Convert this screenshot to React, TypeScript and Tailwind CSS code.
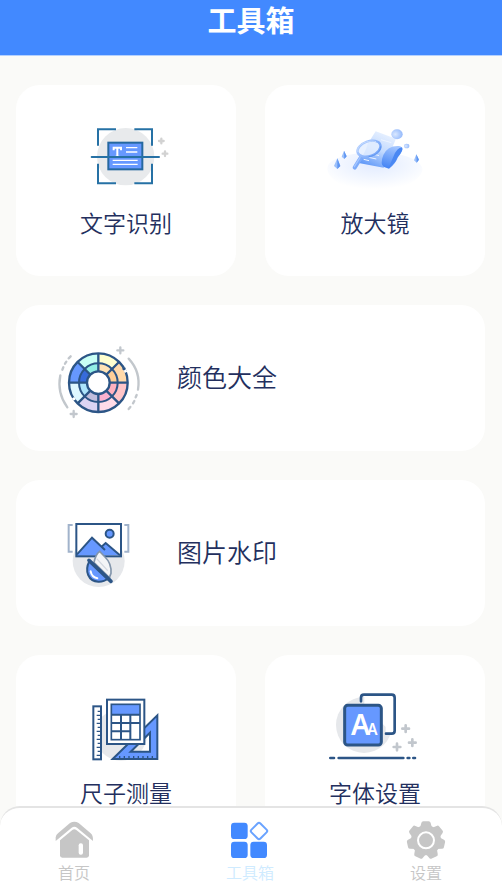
import type { ReactNode } from 'react';

const NAVY = '#2c5586';
const BLUE = '#6698ff';

export default function App() {
  return (
    <div
      lang="zh-CN"
      className="flex h-screen flex-col bg-[#fafaf8] font-['Noto_Sans_CJK_SC',sans-serif] font-[350] text-[#232f5e]"
    >
      <Header />
      <main className="min-h-0 flex-1 overflow-y-auto pt-[29px] pr-[17px] pb-5 pl-4 [scrollbar-width:none]">
        <div className="grid grid-cols-2 gap-[29px]">
          <ToolCard label="文字识别">
            <ScanTextIcon />
          </ToolCard>
          <ToolCard label="放大镜">
            <MagnifierIcon />
          </ToolCard>
          <ToolRow label="颜色大全">
            <ColorWheelIcon />
          </ToolRow>
          <ToolRow label="图片水印">
            <WatermarkIcon />
          </ToolRow>
          <ToolCard label="尺子测量">
            <RulerIcon />
          </ToolCard>
          <ToolCard label="字体设置">
            <FontIcon />
          </ToolCard>
        </div>
      </main>
      <TabBar />
    </div>
  );
}

function Header() {
  return (
    <header className="h-14 shrink-0 border-b border-[#b3d0ff] bg-[#4289ff]">
      <h1 className="text-center text-[29px] leading-[38px] font-bold text-white">
        工具箱
      </h1>
    </header>
  );
}

function ToolCard({ label, children }: { label: string; children: ReactNode }) {
  return (
    <button className="flex cursor-pointer flex-col items-center rounded-3xl bg-white pt-[30px] pb-[37px]">
      {children}
      <span className="text-[23px] leading-[34px]">{label}</span>
    </button>
  );
}

function ToolRow({ label, children }: { label: string; children: ReactNode }) {
  return (
    <button className="col-span-2 flex h-[146px] cursor-pointer items-center gap-[27px] rounded-3xl bg-white pl-[34px]">
      {children}
      <span className="pb-1 text-[25px] leading-9">{label}</span>
    </button>
  );
}

function TabBar() {
  return (
    <nav className="flex h-[76px] shrink-0 justify-between rounded-t-[20px] border-t-2 border-[#e4e4e4] bg-white pt-3 pr-[46px] pl-11">
      <Tab label="首页">
        <HomeIcon />
      </Tab>
      <Tab label="工具箱" active>
        <ToolsIcon />
      </Tab>
      <Tab label="设置">
        <GearIcon />
      </Tab>
    </nav>
  );
}

function Tab({
  label,
  active,
  children,
}: {
  label: string;
  active?: boolean;
  children: ReactNode;
}) {
  return (
    <button
      className={`flex w-[60px] cursor-pointer flex-col items-center gap-0.5 ${active ? 'text-[#cfebff]' : 'text-[#c6c6c6]'}`}
    >
      {children}
      <span className="text-base leading-5">{label}</span>
    </button>
  );
}

function Plus({ x, y, r = 7, color = '#c2c7cd', w = 7 }: { x: number; y: number; r?: number; color?: string; w?: number }) {
  return (
    <path
      d={`M${x - r} ${y}h${r * 2}M${x} ${y - r}v${r * 2}`}
      stroke={color}
      strokeWidth={w}
      strokeLinecap="round"
    />
  );
}

function ScanTextIcon() {
  return (
    <svg className="h-[90px] w-[110px]" viewBox="-27 0 330 270" fill="none">
      <circle cx="137" cy="125" r="86" fill="#e8eaec" />
      <path
        d="M54 92V43h54M163 43h53v49M54 146v59h54M163 205h53v-59"
        stroke="#2671a5"
        strokeWidth="6"
      />
      <rect x="85" y="83" width="102" height="80" fill={BLUE} stroke="#2568a0" strokeWidth="6" />
      <path d="M101 106v-8h22v8M112 98v27M106 125h12" stroke="#fff" strokeWidth="6" />
      <path d="M138 98h34M138 111h34" stroke="#fff" strokeWidth="4" />
      <path d="M98 136h75M98 148h75" stroke="#fff" strokeWidth="4" />
      <path d="M35 126h202" stroke="#2671a5" strokeWidth="6" strokeLinecap="round" />
      <Plus x={244} y={78} color="#d2d2d2" />
      <Plus x={255} y={116} color="#d2d2d2" />
    </svg>
  );
}

function MagnifierIcon() {
  return (
    <svg className="h-[90px] w-[110px]" viewBox="-15 0 330 270" fill="none">
      <defs>
        <radialGradient id="mag-floor" cx="0.5" cy="0.3" r="0.62">
          <stop offset="0" stopColor="#e2ebff" />
          <stop offset="0.5" stopColor="#f0f5ff" />
          <stop offset="1" stopColor="#fff" />
        </radialGradient>
        <linearGradient id="mag-sheet" x1="0.8" y1="0" x2="0.3" y2="1">
          <stop offset="0" stopColor="#edf4ff" />
          <stop offset="0.5" stopColor="#c3dafe" />
          <stop offset="1" stopColor="#5c96f8" />
        </linearGradient>
        <linearGradient id="mag-roll" x1="0.6" y1="0" x2="0.3" y2="1">
          <stop offset="0" stopColor="#a4c6ff" />
          <stop offset="1" stopColor="#4484f4" />
        </linearGradient>
        <linearGradient id="mag-ring" x1="0" y1="0" x2="1" y2="1">
          <stop offset="0" stopColor="#b4d0ff" />
          <stop offset="1" stopColor="#6c9ff7" />
        </linearGradient>
        <radialGradient id="mag-ball" cx="0.35" cy="0.5" r="0.7">
          <stop offset="0" stopColor="#dae8ff" />
          <stop offset="1" stopColor="#8fb6fb" />
        </radialGradient>
      </defs>
      <path
        d="M8 155C15 130 75 113 150 112s136 20 142 48c4 30-60 72-143 72S0 190 8 155Z"
        fill="url(#mag-floor)"
      />
      <path d="M152 49 213 71 176 158 97 143Q119 120 128 87Z" fill="url(#mag-sheet)" />
      <path
        d="M222 93Q188 91 175 120 164 148 177 156L192 161Q213 145 219 126 237 104 231 98 228 94 222 93Z"
        fill="url(#mag-roll)"
      />
      <path d="M231 97Q216 98 205 125T189 160Q210 146 217 128 237 106 231 97Z" fill="#4a88f3" />
      <path d="M168 74l31 9M142 116l20 6M131 127l23 5M116 133l16 4" stroke="#edf4ff" strokeWidth="3" />
      <path d="M108 127 89 158" stroke="#7dabfa" strokeWidth="12" strokeLinecap="round" />
      <path d="M105 128 88 155" stroke="#a3c5ff" strokeWidth="4" strokeLinecap="round" />
      <ellipse
        cx="132"
        cy="101"
        rx="36"
        ry="22"
        transform="rotate(-20 132 101)"
        fill="#e4efff"
        fillOpacity="0.85"
        stroke="url(#mag-ring)"
        strokeWidth="7"
      />
      <path d="M99 111C91 88 133 73 153 80" stroke="#c5dbff" strokeWidth="3" />
      <path d="M167 94c2 16-17 29-36 31" stroke="#5e96f2" strokeWidth="3" />
      <ellipse cx="216" cy="58" rx="17" ry="15" fill="url(#mag-ball)" />
      <ellipse cx="245" cy="93" rx="8" ry="7" fill="url(#mag-ball)" />
      <path d="M37 130 46 153 37 162 27 153ZM57 107 65 124 58 132 50 125ZM274 118 282 134 275 143 267 136Z" fill="#9cc0fa" />
      <path d="M37 130 46 153 37 162ZM57 107 65 124 58 132ZM274 118 282 134 275 143Z" fill="#5f96f2" />
    </svg>
  );
}

// clockwise from twelve o'clock
const OUTER = ['#ffffcf', '#ffd9aa', '#ffc5c8', '#ffdbe8', '#dcd4f4', '#def7ff', '#6698ff', '#c9fff5'];
const INNER = ['#ffe3b5', '#ffcf98', '#ffb1bf', '#fbb1cf', '#c1bddc', '#ade4fb', '#376bda', '#92eee5'];

function slice(i: number, r: number) {
  const a = (i * Math.PI) / 4;
  const b = a + Math.PI / 4;
  const cx = 145;
  const cy = 143;
  return `M${cx} ${cy}L${cx + r * Math.sin(a)} ${cy - r * Math.cos(a)}A${r} ${r} 0 0 1 ${cx + r * Math.sin(b)} ${cy - r * Math.cos(b)}Z`;
}

function ColorWheelIcon() {
  return (
    <svg className="size-[100px]" viewBox="0 -21 300 300" fill="none">
      {OUTER.map((c, i) => (
        <path key={c} d={slice(i, 87)} fill={c} />
      ))}
      {INNER.map((c, i) => (
        <path key={c} d={slice(i, 58)} fill={c} />
      ))}
      <g stroke={NAVY} strokeWidth="7">
        <path d="M145 56v174M58 143h174M83 81l124 124M207 81 83 205" />
        <circle cx="145" cy="143" r="58" strokeWidth="6" />
        <circle cx="145" cy="143" r="34" fill="#fff" />
        <circle cx="145" cy="143" r="88" />
      </g>
      <path d="M221 98 228 112M69 188 74 195" stroke="#fff" strokeWidth="8" />
      <circle cx="222" cy="101" r="5" fill={NAVY} />
      <g stroke="#c2c7cc" strokeWidth="7" strokeLinecap="round">
        <path d="M31 121C24 156 32 190 52 217M37 104l3-7M45 86l4-6M56 70l6-6" />
        <path d="M236 71C262 99 269 134 264 164M260 180l-3 7M253 198l-4 7M241 216l-5 6" />
      </g>
      <Plus x={211} y={46} r={9} />
      <Plus x={71} y={237} r={9} />
    </svg>
  );
}

function WatermarkIcon() {
  return (
    <svg className="size-[100px]" viewBox="-15 -21 300 300" fill="none">
      <circle cx="131" cy="153" r="78" fill="#e6e8eb" />
      <path d="M53 45H41v80h12M208 45h12v80h-12" stroke="#a1b3cb" strokeWidth="6" />
      <rect x="64" y="42" width="134" height="97" fill="#fff" />
      <path d="M66 133 111 83 139 111 152 99 195 136 64 138Z" fill={BLUE} />
      <path d="M66 133 111 83 150 120M138 112 152 99 195 136" stroke={NAVY} strokeWidth="6" />
      <circle cx="164" cy="71" r="12" fill={BLUE} stroke={NAVY} strokeWidth="6" />
      <rect x="64" y="42" width="134" height="97" stroke={NAVY} strokeWidth="6" />
      <path d="M103 154C88 183 100 214 130 215 145 216 155 209 162 204Z" fill={BLUE} stroke={NAVY} strokeWidth="6" />
      <path d="M117 158Q121 134 134 124L150 141Q170 160 168 190L163 203Z" fill="#f3f5f7" stroke="#8295ab" strokeWidth="5" />
      <path d="M125 146 158 182" stroke="#d2d7df" strokeWidth="4" />
      <path d="M102 151 168 214" stroke={NAVY} strokeWidth="11" strokeLinecap="round" />
      <path d="M107 184q3 17 20 21" stroke="#fff" strokeWidth="6" strokeLinecap="round" />
    </svg>
  );
}

function RulerIcon() {
  return (
    <svg className="h-[90px] w-[110px]" viewBox="-27 -15 330 270" fill="none">
      <circle cx="123" cy="134" r="78" fill="#e6e8eb" />
      <rect x="40" y="49" width="23" height="159" fill="#fff" stroke={NAVY} strokeWidth="6" />
      <path
        d="M53 64h8M50 76h11M53 88h8M50 100h11M53 112h8M50 124h11M53 136h8M50 148h11M53 160h8M50 172h11M53 184h8M50 196h11"
        stroke={NAVY}
        strokeWidth="4"
      />
      <path
        d="M98 207 232 76V207ZM152 185H210V128Z"
        fill={BLUE}
        fillRule="evenodd"
        stroke={NAVY}
        strokeWidth="6"
      />
      <path d="M119 205v-7M133 205v-7M147 205v-7M161 205v-7M175 205v-7M189 205v-7M203 205v-7M217 205v-7" stroke={NAVY} strokeWidth="4" />
      <rect x="81" y="29" width="112" height="133" fill="#fff" stroke={NAVY} strokeWidth="6" />
      <rect x="95" y="44" width="84" height="29" fill={BLUE} />
      <rect x="94" y="43" width="86" height="106" stroke={NAVY} strokeWidth="5" />
      <path d="M94 74h86M94 99h86M94 124h57M123 74v75M151 74v75" stroke={NAVY} strokeWidth="6" />
    </svg>
  );
}

function FontIcon() {
  return (
    <svg className="h-[90px] w-[110px]" viewBox="0 0 330 270" fill="none">
      <circle cx="132" cy="120" r="84" fill="#e6e8eb" />
      <path d="M133 59V30H216Q224 30 224 38V146H197V126" fill="#fff" />
      <path
        d="M123 49V38Q123 29 132 29H215Q224 29 224 38V137Q224 146 215 146H198"
        stroke={NAVY}
        strokeWidth="8"
        strokeLinecap="round"
      />
      <rect x="74" y="61" width="110" height="119" rx="9" fill={BLUE} stroke={NAVY} strokeWidth="9" />
      <text x="93" y="149" fontSize="85" fontWeight="600" fill="#fff" className="font-['Noto_Sans',sans-serif]">
        A
      </text>
      <text x="142" y="149" fontSize="46" fontWeight="600" fill="#fff" className="font-['Noto_Sans',sans-serif]">
        A
      </text>
      <path d="M31 219H42M56 219H250M263 219h5M280 219h5" stroke={NAVY} strokeWidth="8" strokeLinecap="round" />
      <Plus x={257} y={131} r={10} w={8} />
      <Plus x={277} y={173} r={10} w={8} />
      <Plus x={231} y={186} r={10} w={8} />
    </svg>
  );
}

function HomeIcon() {
  return (
    <svg className="size-10" viewBox="162 90 120 120" fill="#c6c6c6">
      <path d="M167 142Q168 134 174 130L210 99Q223 91 236 99L272 130Q280 137 279 153L231 113Q223 108 215 113L167 153Z" />
      <path d="M180 151 217 120Q223 116 229 120L267 151V196Q267 203 260 203H187Q180 203 180 196Z" />
      <rect x="236" y="160" width="13" height="34" rx="6" fill="#fff" />
    </svg>
  );
}

function ToolsIcon() {
  return (
    <svg className="size-10" viewBox="690 90 120 120" fill="#4289ff">
      <rect x="693" y="98" width="50" height="49" rx="10" />
      <rect x="693" y="155" width="50" height="49" rx="10" />
      <rect x="751" y="155" width="50" height="49" rx="10" />
      <rect
        x="758"
        y="104"
        width="38"
        height="38"
        rx="6"
        transform="rotate(45 777 123)"
        fill="#fff"
        stroke="#6aa3ff"
        strokeWidth="6"
      />
    </svg>
  );
}

function GearIcon() {
  return (
    <svg className="size-10" viewBox="465 90 120 120" fill="#c6c6c6">
      <circle cx="525" cy="151" r="45" />
      {[0, 1, 2, 3, 4, 5, 6].map((i) => (
        <path
          key={i}
          d="M506 117 511 99Q512 94 517 94H533Q538 94 539 99L544 117Z"
          transform={`rotate(${(i * 360) / 7} 525 151)`}
        />
      ))}
      <circle cx="525" cy="151" r="24" stroke="#fff" strokeWidth="6" />
    </svg>
  );
}
